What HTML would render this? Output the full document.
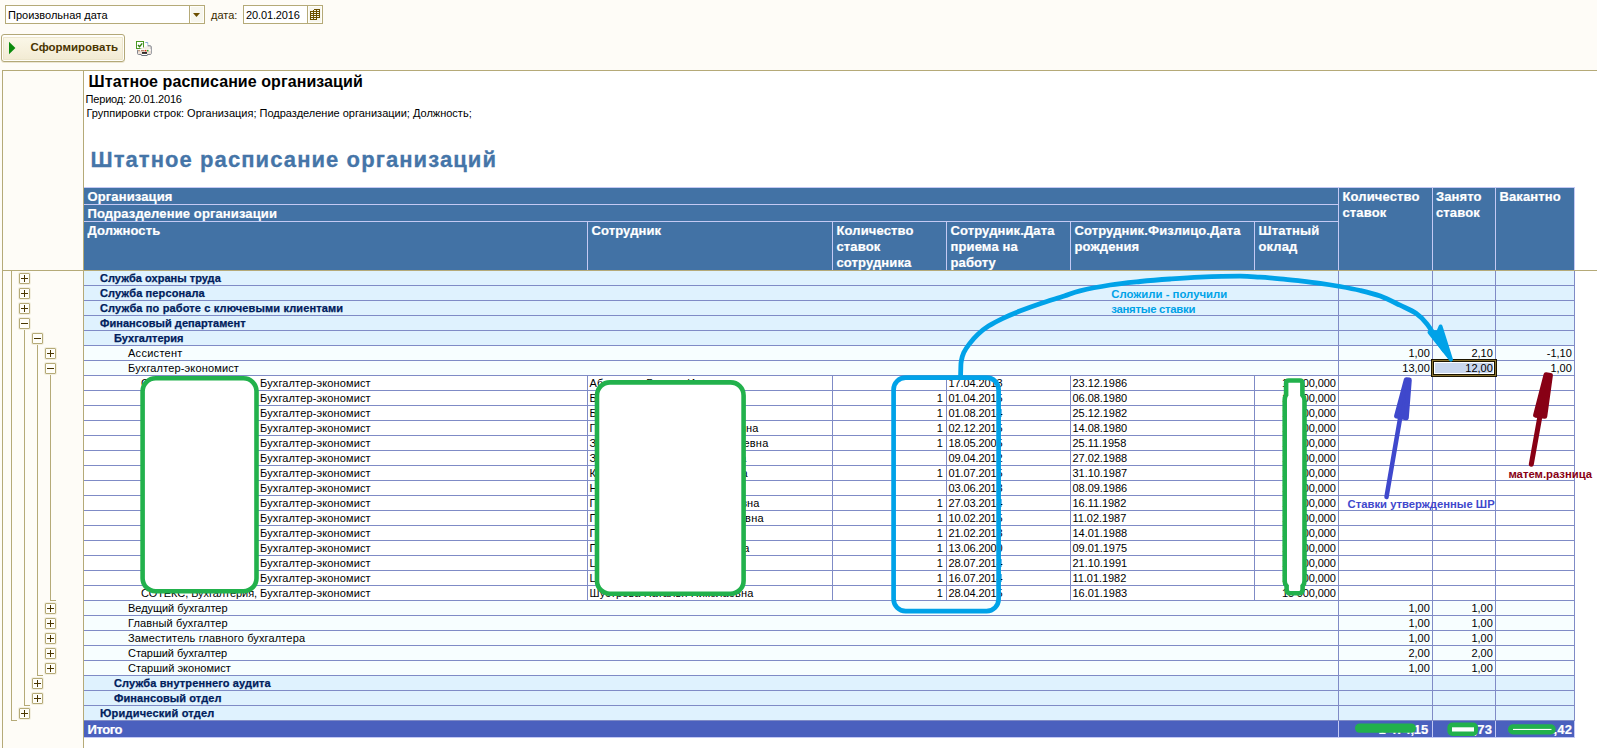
<!DOCTYPE html>
<html lang="ru"><head><meta charset="utf-8"><title>Штатное расписание организаций</title>
<style>
html,body{margin:0;padding:0}
body{width:1597px;height:748px;overflow:hidden;position:relative;background:#fefcf7;font-family:"Liberation Sans",sans-serif;font-size:11px;color:#000}
div,svg{position:absolute;box-sizing:border-box}
.t{white-space:pre;line-height:14px;font-size:11px}
.ls{letter-spacing:0.13px}
.b{white-space:pre;line-height:14px;font-size:11px;font-weight:bold;color:#00205c;-webkit-text-stroke:0.25px #00205c}
.h{white-space:pre;line-height:16px;font-size:13px;font-weight:bold;color:#fff;letter-spacing:0.12px;-webkit-text-stroke:0.2px #fff}
.ui{white-space:pre;line-height:14px;font-size:11px}
.pm{width:11px;height:11px;border:1px solid #b5aa78;background:#fffef9;border-radius:1px;box-shadow:0 0 0 1px #f3efe0}
.pm i{position:absolute;left:1px;top:4px;width:7px;height:1px;background:#4a3600}
.pm b{position:absolute;left:4px;top:1px;width:1px;height:7px;background:#4a3600}
</style></head><body>

<div class="" style="left:5px;top:5px;width:200px;height:19px;background:#fff;border:1px solid #b5aa78;"></div>
<div class="" style="left:189px;top:5px;width:16px;height:19px;background:#f7f6ee;border:1px solid #b5aa78;box-shadow:inset 0 0 0 1px #fffef9;"></div>
<svg style="left:192px;top:12px" width="10" height="6" viewBox="0 0 10 6"><path d="M1 1h7l-3.5 4z" fill="#6b4e00"/></svg>
<div class="ui" style="left:8px;top:8px;">Произвольная дата</div>
<div class="ui" style="left:211px;top:8px;color:#3a2c00;">дата:</div>
<div class="" style="left:243px;top:5px;width:80px;height:19px;background:#fff;border:1px solid #b5aa78;"></div>
<div class="" style="left:307px;top:5px;width:16px;height:19px;background:#f7f6ee;border:1px solid #b5aa78;box-shadow:inset 0 0 0 1px #fffef9;"></div>
<div class="ui" style="left:246px;top:8px;letter-spacing:-0.12px;">20.01.2016</div>
<svg style="left:309px;top:8px" width="12" height="13" viewBox="0 0 12 13" shape-rendering="crispEdges"><g fill="none" stroke="#6b4e00" stroke-width="1"><path d="M4.5 1.5h6v8h-3M1.5 3.5h6v8h-6zM4.5 1.5v2M7.5 1.5v2M7.5 3.5h3M1.5 5.5h9M1.5 7.5h9M1.5 9.5h6M4.5 3.5v8M7.5 3.5v6"/></g></svg>
<div style="left:1px;top:34px;width:124px;height:28px;border:1px solid #b3a878;border-radius:3px;background:linear-gradient(#fbf8ea,#f6f0dc 60%,#f1ead2);box-shadow:inset 0 2px 0 0 #fffefa,inset 0 0 0 1px #fffefa,inset 0 3px 0 0 #eee7cf,inset 0 0 0 2px #ece5cb,0 1px 0 #ece6d2"></div>
<svg style="left:8px;top:41px" width="9" height="14" viewBox="0 0 9 14"><path d="M1 0.8L7.4 7L1 13.2z" fill="#0a8a0c"/></svg>
<div class="ui" style="left:30.5px;top:40px;font-weight:bold;font-size:11.5px;color:#4a3500;">Сформировать</div>
<svg style="left:134px;top:39px" width="20" height="19" viewBox="0 0 20 19">
<rect x="2.5" y="2.5" width="7" height="7" fill="#fff" stroke="#4a9a22" stroke-width="1"/>
<path d="M4 6l1.6 1.7L8.2 4.4" fill="none" stroke="#2e7d0e" stroke-width="1.4"/>
<path d="M11.3 3.5h2.4v5" fill="none" stroke="#7fa8d0" stroke-width="1"/>
<rect x="11" y="4.5" width="2.5" height="5" fill="#fff"/>
<path d="M13.8 6.8h2.4a1 1 0 0 1 1 1v6.6a1 1 0 0 1-1 1h-11.7a1 1 0 0 1-1-1v-3.6" fill="#f3ece6" stroke="#777c86" stroke-width="1"/>
<rect x="3.9" y="10.2" width="12.8" height="4.8" fill="#efe3da"/>
<rect x="3.9" y="10.2" width="12.8" height="1.6" fill="#fff"/>
<rect x="4.2" y="11.2" width="1.6" height="1" fill="#a06a48"/><rect x="7" y="11.2" width="3.6" height="1" fill="#a06a48"/>
<rect x="11" y="10.9" width="1.5" height="1.5" fill="#f02a1a"/><rect x="13" y="10.9" width="1.5" height="1.5" fill="#22b020"/>
<rect x="8" y="13.2" width="5" height="1.5" fill="#000"/>
<path d="M6.8 15l.8 1.5h5.6l.8-1.5" fill="#fff" stroke="#70757f" stroke-width="1"/>
</svg>
<div class="" style="left:2px;top:70px;width:1595px;height:1px;background:#b5aa78;"></div>
<div class="" style="left:2px;top:70px;width:1px;height:678px;background:#b5aa78;"></div>
<div class="" style="left:83px;top:71px;width:1px;height:677px;background:#b5aa78;"></div>
<div class="" style="left:84px;top:71px;width:1513px;height:677px;background:#fff;"></div>
<div class="t" style="left:88.6px;top:73px;font-size:16px;font-weight:bold;line-height:18px;letter-spacing:0.07px;">Штатное расписание организаций</div>
<div class="t" style="left:85.6px;top:92px;letter-spacing:-0.2px;">Период: 20.01.2016</div>
<div class="t" style="left:86.4px;top:106px;">Группировки строк: Организация; Подразделение организации; Должность;</div>
<div class="t" style="left:90.5px;top:146px;font-size:22px;font-weight:bold;line-height:28px;color:#4575a8;letter-spacing:1.08px;-webkit-text-stroke:0.3px #4575a8;">Штатное расписание организаций</div>
<div class="" style="left:84px;top:187px;width:1491px;height:84px;background:#4272a5;"></div>
<div class="" style="left:84px;top:187px;width:1491px;height:1px;background:#c4c9f4;"></div>
<div class="" style="left:84px;top:204px;width:1254px;height:1px;background:#c4c9f4;"></div>
<div class="" style="left:84px;top:221px;width:1254px;height:1px;background:#c4c9f4;"></div>
<div class="" style="left:587px;top:222px;width:1px;height:48px;background:#c4c9f4;"></div>
<div class="" style="left:832px;top:222px;width:1px;height:48px;background:#c4c9f4;"></div>
<div class="" style="left:946px;top:222px;width:1px;height:48px;background:#c4c9f4;"></div>
<div class="" style="left:1070px;top:222px;width:1px;height:48px;background:#c4c9f4;"></div>
<div class="" style="left:1254px;top:222px;width:1px;height:48px;background:#c4c9f4;"></div>
<div class="" style="left:1338px;top:187px;width:1px;height:83px;background:#c4c9f4;"></div>
<div class="" style="left:1432px;top:187px;width:1px;height:83px;background:#c4c9f4;"></div>
<div class="" style="left:1495px;top:187px;width:1px;height:83px;background:#c4c9f4;"></div>
<div class="" style="left:1574px;top:187px;width:1px;height:83px;background:#c4c9f4;"></div>
<div class="h" style="left:87.5px;top:189px;">Организация</div>
<div class="h" style="left:87.5px;top:206px;">Подразделение организации</div>
<div class="h" style="left:87.5px;top:223px;">Должность</div>
<div class="h" style="left:591.5px;top:223px;">Сотрудник</div>
<div class="h" style="left:836.5px;top:223px;">Количество
ставок
сотрудника</div>
<div class="h" style="left:950.5px;top:223px;">Сотрудник.Дата
приема на
работу</div>
<div class="h" style="left:1074.5px;top:223px;">Сотрудник.Физлицо.Дата
рождения</div>
<div class="h" style="left:1258.5px;top:223px;">Штатный
оклад</div>
<div class="h" style="left:1342.5px;top:189px;">Количество
ставок</div>
<div class="h" style="left:1436px;top:189px;">Занято
ставок</div>
<div class="h" style="left:1499.5px;top:189px;">Вакантно</div>
<div class="" style="left:84px;top:271px;width:1490px;height:14px;background:#dff2fe;"></div>
<div class="" style="left:84px;top:285px;width:1491px;height:1px;background:#7f8bc6;"></div>
<div class="" style="left:84px;top:286px;width:1490px;height:14px;background:#dff2fe;"></div>
<div class="" style="left:84px;top:300px;width:1491px;height:1px;background:#7f8bc6;"></div>
<div class="" style="left:84px;top:301px;width:1490px;height:14px;background:#dff2fe;"></div>
<div class="" style="left:84px;top:315px;width:1491px;height:1px;background:#7f8bc6;"></div>
<div class="" style="left:84px;top:316px;width:1490px;height:14px;background:#dff2fe;"></div>
<div class="" style="left:84px;top:330px;width:1491px;height:1px;background:#7f8bc6;"></div>
<div class="" style="left:84px;top:331px;width:1490px;height:14px;background:#dff2fe;"></div>
<div class="" style="left:84px;top:345px;width:1491px;height:1px;background:#7f8bc6;"></div>
<div class="" style="left:84px;top:346px;width:1490px;height:14px;background:#f7feff;"></div>
<div class="" style="left:84px;top:360px;width:1491px;height:1px;background:#7f8bc6;"></div>
<div class="" style="left:84px;top:361px;width:1490px;height:14px;background:#f7feff;"></div>
<div class="" style="left:84px;top:375px;width:1491px;height:1px;background:#7f8bc6;"></div>
<div class="" style="left:84px;top:376px;width:1490px;height:14px;background:#fff;"></div>
<div class="" style="left:84px;top:390px;width:1491px;height:1px;background:#7f8bc6;"></div>
<div class="" style="left:84px;top:391px;width:1490px;height:14px;background:#fff;"></div>
<div class="" style="left:84px;top:405px;width:1491px;height:1px;background:#7f8bc6;"></div>
<div class="" style="left:84px;top:406px;width:1490px;height:14px;background:#fff;"></div>
<div class="" style="left:84px;top:420px;width:1491px;height:1px;background:#7f8bc6;"></div>
<div class="" style="left:84px;top:421px;width:1490px;height:14px;background:#fff;"></div>
<div class="" style="left:84px;top:435px;width:1491px;height:1px;background:#7f8bc6;"></div>
<div class="" style="left:84px;top:436px;width:1490px;height:14px;background:#fff;"></div>
<div class="" style="left:84px;top:450px;width:1491px;height:1px;background:#7f8bc6;"></div>
<div class="" style="left:84px;top:451px;width:1490px;height:14px;background:#fff;"></div>
<div class="" style="left:84px;top:465px;width:1491px;height:1px;background:#7f8bc6;"></div>
<div class="" style="left:84px;top:466px;width:1490px;height:14px;background:#fff;"></div>
<div class="" style="left:84px;top:480px;width:1491px;height:1px;background:#7f8bc6;"></div>
<div class="" style="left:84px;top:481px;width:1490px;height:14px;background:#fff;"></div>
<div class="" style="left:84px;top:495px;width:1491px;height:1px;background:#7f8bc6;"></div>
<div class="" style="left:84px;top:496px;width:1490px;height:14px;background:#fff;"></div>
<div class="" style="left:84px;top:510px;width:1491px;height:1px;background:#7f8bc6;"></div>
<div class="" style="left:84px;top:511px;width:1490px;height:14px;background:#fff;"></div>
<div class="" style="left:84px;top:525px;width:1491px;height:1px;background:#7f8bc6;"></div>
<div class="" style="left:84px;top:526px;width:1490px;height:14px;background:#fff;"></div>
<div class="" style="left:84px;top:540px;width:1491px;height:1px;background:#7f8bc6;"></div>
<div class="" style="left:84px;top:541px;width:1490px;height:14px;background:#fff;"></div>
<div class="" style="left:84px;top:555px;width:1491px;height:1px;background:#7f8bc6;"></div>
<div class="" style="left:84px;top:556px;width:1490px;height:14px;background:#fff;"></div>
<div class="" style="left:84px;top:570px;width:1491px;height:1px;background:#7f8bc6;"></div>
<div class="" style="left:84px;top:571px;width:1490px;height:14px;background:#fff;"></div>
<div class="" style="left:84px;top:585px;width:1491px;height:1px;background:#7f8bc6;"></div>
<div class="" style="left:84px;top:586px;width:1490px;height:14px;background:#fff;"></div>
<div class="" style="left:84px;top:600px;width:1491px;height:1px;background:#7f8bc6;"></div>
<div class="" style="left:84px;top:601px;width:1490px;height:14px;background:#f7feff;"></div>
<div class="" style="left:84px;top:615px;width:1491px;height:1px;background:#7f8bc6;"></div>
<div class="" style="left:84px;top:616px;width:1490px;height:14px;background:#f7feff;"></div>
<div class="" style="left:84px;top:630px;width:1491px;height:1px;background:#7f8bc6;"></div>
<div class="" style="left:84px;top:631px;width:1490px;height:14px;background:#f7feff;"></div>
<div class="" style="left:84px;top:645px;width:1491px;height:1px;background:#7f8bc6;"></div>
<div class="" style="left:84px;top:646px;width:1490px;height:14px;background:#f7feff;"></div>
<div class="" style="left:84px;top:660px;width:1491px;height:1px;background:#7f8bc6;"></div>
<div class="" style="left:84px;top:661px;width:1490px;height:14px;background:#f7feff;"></div>
<div class="" style="left:84px;top:675px;width:1491px;height:1px;background:#7f8bc6;"></div>
<div class="" style="left:84px;top:676px;width:1490px;height:14px;background:#dff2fe;"></div>
<div class="" style="left:84px;top:690px;width:1491px;height:1px;background:#7f8bc6;"></div>
<div class="" style="left:84px;top:691px;width:1490px;height:14px;background:#dff2fe;"></div>
<div class="" style="left:84px;top:705px;width:1491px;height:1px;background:#7f8bc6;"></div>
<div class="" style="left:84px;top:706px;width:1490px;height:14px;background:#dff2fe;"></div>
<div class="" style="left:84px;top:720px;width:1491px;height:1px;background:#7f8bc6;"></div>
<div class="" style="left:1338px;top:271px;width:1px;height:450px;background:#7f8bc6;"></div>
<div class="" style="left:1432px;top:271px;width:1px;height:450px;background:#7f8bc6;"></div>
<div class="" style="left:1495px;top:271px;width:1px;height:450px;background:#7f8bc6;"></div>
<div class="" style="left:1574px;top:271px;width:1px;height:450px;background:#7f8bc6;"></div>
<div class="" style="left:587px;top:376px;width:1px;height:225px;background:#7f8bc6;"></div>
<div class="" style="left:832px;top:376px;width:1px;height:225px;background:#7f8bc6;"></div>
<div class="" style="left:946px;top:376px;width:1px;height:225px;background:#7f8bc6;"></div>
<div class="" style="left:1070px;top:376px;width:1px;height:225px;background:#7f8bc6;"></div>
<div class="" style="left:1254px;top:376px;width:1px;height:225px;background:#7f8bc6;"></div>
<div class="b" style="left:100px;top:271px;letter-spacing:0.030px;">Служба охраны труда</div>
<div class="b" style="left:100px;top:286px;letter-spacing:0.112px;">Служба персонала</div>
<div class="b" style="left:100px;top:301px;letter-spacing:0.143px;">Служба по работе с ключевыми клиентами</div>
<div class="b" style="left:100px;top:316px;letter-spacing:0.046px;">Финансовый департамент</div>
<div class="b" style="left:114px;top:331px;letter-spacing:0.028px;">Бухгалтерия</div>
<div class="t" style="left:128px;top:346px;letter-spacing:0.279px;">Ассистент</div>
<div class="t" style="left:1338px;top:346px;width:91.8px;text-align:right;">1,00</div>
<div class="t" style="left:1432px;top:346px;width:60.8px;text-align:right;">2,10</div>
<div class="t" style="left:1495px;top:346px;width:76.8px;text-align:right;">-1,10</div>
<div class="t" style="left:128px;top:361px;letter-spacing:0.150px;">Бухгалтер-экономист</div>
<div class="t" style="left:1338px;top:361px;width:91.8px;text-align:right;">13,00</div>
<div class="t" style="left:1432px;top:361px;width:60.8px;text-align:right;">12,00</div>
<div class="t" style="left:1495px;top:361px;width:76.8px;text-align:right;">1,00</div>
<div class="t" style="left:141px;top:376px;"><span style="letter-spacing:-0.06px">СОТЕКС, Бухгалтерия, </span><span class="ls">Бухгалтер-экономист</span></div>
<div class="t emp" style="left:589.5px;top:376px;letter-spacing:0.259px;">Абрамова Галина Игоревна</div>
<div class="t" style="left:948.5px;top:376px;letter-spacing:-0.1px;">17.04.2013</div>
<div class="t" style="left:1072.5px;top:376px;letter-spacing:-0.05px;">23.12.1986</div>
<div class="t" style="left:1254px;top:376px;width:81.8px;text-align:right;letter-spacing:-0.12px;">15 000,000</div>
<div class="t" style="left:141px;top:391px;"><span style="letter-spacing:-0.06px">СОТЕКС, Бухгалтерия, </span><span class="ls">Бухгалтер-экономист</span></div>
<div class="t emp" style="left:589.5px;top:391px;letter-spacing:0.200px;">Белова Ирина Олеговна</div>
<div class="t" style="left:832px;top:391px;width:110.8px;text-align:right;">1</div>
<div class="t" style="left:948.5px;top:391px;letter-spacing:-0.1px;">01.04.2015</div>
<div class="t" style="left:1072.5px;top:391px;letter-spacing:-0.05px;">06.08.1980</div>
<div class="t" style="left:1254px;top:391px;width:81.8px;text-align:right;letter-spacing:-0.12px;">15 000,000</div>
<div class="t" style="left:141px;top:406px;"><span style="letter-spacing:-0.06px">СОТЕКС, Бухгалтерия, </span><span class="ls">Бухгалтер-экономист</span></div>
<div class="t emp" style="left:589.5px;top:406px;letter-spacing:0.200px;">Быкова Ольга Ильинична</div>
<div class="t" style="left:832px;top:406px;width:110.8px;text-align:right;">1</div>
<div class="t" style="left:948.5px;top:406px;letter-spacing:-0.1px;">01.08.2014</div>
<div class="t" style="left:1072.5px;top:406px;letter-spacing:-0.05px;">25.12.1982</div>
<div class="t" style="left:1254px;top:406px;width:81.8px;text-align:right;letter-spacing:-0.12px;">15 000,000</div>
<div class="t" style="left:141px;top:421px;"><span style="letter-spacing:-0.06px">СОТЕКС, Бухгалтерия, </span><span class="ls">Бухгалтер-экономист</span></div>
<div class="t emp" style="left:589.5px;top:421px;letter-spacing:0.170px;">Гаврилова Екатерина Павловна</div>
<div class="t" style="left:832px;top:421px;width:110.8px;text-align:right;">1</div>
<div class="t" style="left:948.5px;top:421px;letter-spacing:-0.1px;">02.12.2015</div>
<div class="t" style="left:1072.5px;top:421px;letter-spacing:-0.05px;">14.08.1980</div>
<div class="t" style="left:1254px;top:421px;width:81.8px;text-align:right;letter-spacing:-0.12px;">15 000,000</div>
<div class="t" style="left:141px;top:436px;"><span style="letter-spacing:-0.06px">СОТЕКС, Бухгалтерия, </span><span class="ls">Бухгалтер-экономист</span></div>
<div class="t emp" style="left:589.5px;top:436px;letter-spacing:0.231px;">Зайцева Александра Валерьевна</div>
<div class="t" style="left:832px;top:436px;width:110.8px;text-align:right;">1</div>
<div class="t" style="left:948.5px;top:436px;letter-spacing:-0.1px;">18.05.2005</div>
<div class="t" style="left:1072.5px;top:436px;letter-spacing:-0.05px;">25.11.1958</div>
<div class="t" style="left:1254px;top:436px;width:81.8px;text-align:right;letter-spacing:-0.12px;">15 000,000</div>
<div class="t" style="left:141px;top:451px;"><span style="letter-spacing:-0.06px">СОТЕКС, Бухгалтерия, </span><span class="ls">Бухгалтер-экономист</span></div>
<div class="t emp" style="left:589.5px;top:451px;letter-spacing:0.156px;">Зуева Валентина Васильевна</div>
<div class="t" style="left:948.5px;top:451px;letter-spacing:-0.1px;">09.04.2012</div>
<div class="t" style="left:1072.5px;top:451px;letter-spacing:-0.05px;">27.02.1988</div>
<div class="t" style="left:1254px;top:451px;width:81.8px;text-align:right;letter-spacing:-0.12px;">15 000,000</div>
<div class="t" style="left:141px;top:466px;"><span style="letter-spacing:-0.06px">СОТЕКС, Бухгалтерия, </span><span class="ls">Бухгалтер-экономист</span></div>
<div class="t emp" style="left:589.5px;top:466px;letter-spacing:0.357px;">Кузнецова Марина Павловна</div>
<div class="t" style="left:832px;top:466px;width:110.8px;text-align:right;">1</div>
<div class="t" style="left:948.5px;top:466px;letter-spacing:-0.1px;">01.07.2015</div>
<div class="t" style="left:1072.5px;top:466px;letter-spacing:-0.05px;">31.10.1987</div>
<div class="t" style="left:1254px;top:466px;width:81.8px;text-align:right;letter-spacing:-0.12px;">15 000,000</div>
<div class="t" style="left:141px;top:481px;"><span style="letter-spacing:-0.06px">СОТЕКС, Бухгалтерия, </span><span class="ls">Бухгалтер-экономист</span></div>
<div class="t emp" style="left:589.5px;top:481px;letter-spacing:0.200px;">Носова Ольга Ивановна</div>
<div class="t" style="left:948.5px;top:481px;letter-spacing:-0.1px;">03.06.2013</div>
<div class="t" style="left:1072.5px;top:481px;letter-spacing:-0.05px;">08.09.1986</div>
<div class="t" style="left:1254px;top:481px;width:81.8px;text-align:right;letter-spacing:-0.12px;">15 000,000</div>
<div class="t" style="left:141px;top:496px;"><span style="letter-spacing:-0.06px">СОТЕКС, Бухгалтерия, </span><span class="ls">Бухгалтер-экономист</span></div>
<div class="t emp" style="left:589.5px;top:496px;letter-spacing:0.109px;">Павленко Светлана Дмитриевна</div>
<div class="t" style="left:832px;top:496px;width:110.8px;text-align:right;">1</div>
<div class="t" style="left:948.5px;top:496px;letter-spacing:-0.1px;">27.03.2014</div>
<div class="t" style="left:1072.5px;top:496px;letter-spacing:-0.05px;">16.11.1982</div>
<div class="t" style="left:1254px;top:496px;width:81.8px;text-align:right;letter-spacing:-0.12px;">15 000,000</div>
<div class="t" style="left:141px;top:511px;"><span style="letter-spacing:-0.06px">СОТЕКС, Бухгалтерия, </span><span class="ls">Бухгалтер-экономист</span></div>
<div class="t emp" style="left:589.5px;top:511px;letter-spacing:0.280px;">Пономарева Виктория Олеговна</div>
<div class="t" style="left:832px;top:511px;width:110.8px;text-align:right;">1</div>
<div class="t" style="left:948.5px;top:511px;letter-spacing:-0.1px;">10.02.2015</div>
<div class="t" style="left:1072.5px;top:511px;letter-spacing:-0.05px;">11.02.1987</div>
<div class="t" style="left:1254px;top:511px;width:81.8px;text-align:right;letter-spacing:-0.12px;">15 000,000</div>
<div class="t" style="left:141px;top:526px;"><span style="letter-spacing:-0.06px">СОТЕКС, Бухгалтерия, </span><span class="ls">Бухгалтер-экономист</span></div>
<div class="t emp" style="left:589.5px;top:526px;letter-spacing:0.200px;">Попова Анна Юрьевна</div>
<div class="t" style="left:832px;top:526px;width:110.8px;text-align:right;">1</div>
<div class="t" style="left:948.5px;top:526px;letter-spacing:-0.1px;">21.02.2013</div>
<div class="t" style="left:1072.5px;top:526px;letter-spacing:-0.05px;">14.01.1988</div>
<div class="t" style="left:1254px;top:526px;width:81.8px;text-align:right;letter-spacing:-0.12px;">15 000,000</div>
<div class="t" style="left:141px;top:541px;"><span style="letter-spacing:-0.06px">СОТЕКС, Бухгалтерия, </span><span class="ls">Бухгалтер-экономист</span></div>
<div class="t emp" style="left:589.5px;top:541px;letter-spacing:0.177px;">Прохорова Наталия Павловна</div>
<div class="t" style="left:832px;top:541px;width:110.8px;text-align:right;">1</div>
<div class="t" style="left:948.5px;top:541px;letter-spacing:-0.1px;">13.06.2000</div>
<div class="t" style="left:1072.5px;top:541px;letter-spacing:-0.05px;">09.01.1975</div>
<div class="t" style="left:1254px;top:541px;width:81.8px;text-align:right;letter-spacing:-0.12px;">15 000,000</div>
<div class="t" style="left:141px;top:556px;"><span style="letter-spacing:-0.06px">СОТЕКС, Бухгалтерия, </span><span class="ls">Бухгалтер-экономист</span></div>
<div class="t emp" style="left:589.5px;top:556px;letter-spacing:0.200px;">Царева Юлия Олеговна</div>
<div class="t" style="left:832px;top:556px;width:110.8px;text-align:right;">1</div>
<div class="t" style="left:948.5px;top:556px;letter-spacing:-0.1px;">28.07.2014</div>
<div class="t" style="left:1072.5px;top:556px;letter-spacing:-0.05px;">21.10.1991</div>
<div class="t" style="left:1254px;top:556px;width:81.8px;text-align:right;letter-spacing:-0.12px;">15 000,000</div>
<div class="t" style="left:141px;top:571px;"><span style="letter-spacing:-0.06px">СОТЕКС, Бухгалтерия, </span><span class="ls">Бухгалтер-экономист</span></div>
<div class="t emp" style="left:589.5px;top:571px;letter-spacing:0.200px;">Цветкова Инна Ильинична</div>
<div class="t" style="left:832px;top:571px;width:110.8px;text-align:right;">1</div>
<div class="t" style="left:948.5px;top:571px;letter-spacing:-0.1px;">16.07.2014</div>
<div class="t" style="left:1072.5px;top:571px;letter-spacing:-0.05px;">11.01.1982</div>
<div class="t" style="left:1254px;top:571px;width:81.8px;text-align:right;letter-spacing:-0.12px;">15 000,000</div>
<div class="t" style="left:141px;top:586px;"><span style="letter-spacing:-0.06px">СОТЕКС, Бухгалтерия, </span><span class="ls">Бухгалтер-экономист</span></div>
<div class="t emp" style="left:589.5px;top:586px;letter-spacing:0.121px;">Шустрова Наталья Николаевна</div>
<div class="t" style="left:832px;top:586px;width:110.8px;text-align:right;">1</div>
<div class="t" style="left:948.5px;top:586px;letter-spacing:-0.1px;">28.04.2015</div>
<div class="t" style="left:1072.5px;top:586px;letter-spacing:-0.05px;">16.01.1983</div>
<div class="t" style="left:1254px;top:586px;width:81.8px;text-align:right;letter-spacing:-0.12px;">15 000,000</div>
<div class="t" style="left:128px;top:601px;letter-spacing:-0.034px;">Ведущий бухгалтер</div>
<div class="t" style="left:1338px;top:601px;width:91.8px;text-align:right;">1,00</div>
<div class="t" style="left:1432px;top:601px;width:60.8px;text-align:right;">1,00</div>
<div class="t" style="left:128px;top:616px;letter-spacing:0.136px;">Главный бухгалтер</div>
<div class="t" style="left:1338px;top:616px;width:91.8px;text-align:right;">1,00</div>
<div class="t" style="left:1432px;top:616px;width:60.8px;text-align:right;">1,00</div>
<div class="t" style="left:128px;top:631px;letter-spacing:0.136px;">Заместитель главного бухгалтера</div>
<div class="t" style="left:1338px;top:631px;width:91.8px;text-align:right;">1,00</div>
<div class="t" style="left:1432px;top:631px;width:60.8px;text-align:right;">1,00</div>
<div class="t" style="left:128px;top:646px;letter-spacing:-0.034px;">Старший бухгалтер</div>
<div class="t" style="left:1338px;top:646px;width:91.8px;text-align:right;">2,00</div>
<div class="t" style="left:1432px;top:646px;width:60.8px;text-align:right;">2,00</div>
<div class="t" style="left:128px;top:661px;letter-spacing:0.023px;">Старший экономист</div>
<div class="t" style="left:1338px;top:661px;width:91.8px;text-align:right;">1,00</div>
<div class="t" style="left:1432px;top:661px;width:60.8px;text-align:right;">1,00</div>
<div class="b" style="left:114px;top:676px;letter-spacing:0.132px;">Служба внутреннего аудита</div>
<div class="b" style="left:114px;top:691px;letter-spacing:0.088px;">Финансовый отдел</div>
<div class="b" style="left:100px;top:706px;letter-spacing:0.212px;">Юридический отдел</div>
<div class="" style="left:84px;top:721px;width:1491px;height:17px;background:#4a60be;"></div>
<div class="" style="left:84px;top:737px;width:1491px;height:1px;background:#c4c9f4;"></div>
<div class="" style="left:1338px;top:721px;width:1px;height:17px;background:#c4c9f4;"></div>
<div class="" style="left:1432px;top:721px;width:1px;height:17px;background:#c4c9f4;"></div>
<div class="" style="left:1495px;top:721px;width:1px;height:17px;background:#c4c9f4;"></div>
<div class="" style="left:1574px;top:721px;width:1px;height:17px;background:#c4c9f4;"></div>
<div class="h" style="left:87.5px;top:722px;letter-spacing:-0.4px;">Итого</div>
<div class="h" style="left:1338px;top:722px;width:90px;text-align:right;letter-spacing:-0.15px;">1 474,15</div>
<div class="h" style="left:1432px;top:722px;width:60px;text-align:right;">161,73</div>
<div class="h" style="left:1495px;top:722px;width:77px;text-align:right;">312,42</div>
<div class="" style="left:3px;top:270px;width:1594px;height:1px;background:#b5aa78;"></div>
<div class="" style="left:11px;top:271px;width:1px;height:450px;background:#b5aa78;"></div>
<div class="" style="left:11px;top:720px;width:6px;height:1px;background:#b5aa78;"></div>
<div class="" style="left:24px;top:329px;width:1px;height:377px;background:#b5aa78;"></div>
<div class="" style="left:24px;top:705px;width:6px;height:1px;background:#b5aa78;"></div>
<div class="" style="left:37px;top:344px;width:1px;height:332px;background:#b5aa78;"></div>
<div class="" style="left:37px;top:675px;width:6px;height:1px;background:#b5aa78;"></div>
<div class="" style="left:50px;top:374px;width:1px;height:227px;background:#b5aa78;"></div>
<div class="" style="left:50px;top:600px;width:6px;height:1px;background:#b5aa78;"></div>
<div class="pm" style="left:19px;top:273px"><i></i><b></b></div>
<div class="pm" style="left:19px;top:288px"><i></i><b></b></div>
<div class="pm" style="left:19px;top:303px"><i></i><b></b></div>
<div class="pm" style="left:19px;top:318px"><i></i></div>
<div class="pm" style="left:32px;top:333px"><i></i></div>
<div class="pm" style="left:45px;top:348px"><i></i><b></b></div>
<div class="pm" style="left:45px;top:363px"><i></i></div>
<div class="pm" style="left:45px;top:603px"><i></i><b></b></div>
<div class="pm" style="left:45px;top:618px"><i></i><b></b></div>
<div class="pm" style="left:45px;top:633px"><i></i><b></b></div>
<div class="pm" style="left:45px;top:648px"><i></i><b></b></div>
<div class="pm" style="left:45px;top:663px"><i></i><b></b></div>
<div class="pm" style="left:32px;top:678px"><i></i><b></b></div>
<div class="pm" style="left:32px;top:693px"><i></i><b></b></div>
<div class="pm" style="left:19px;top:708px"><i></i><b></b></div>
<div class="" style="left:1431px;top:359px;width:66px;height:18px;border:1px solid #1c1500;"></div>
<div class="" style="left:1432px;top:360px;width:64px;height:16px;border:1px solid #8a7432;"></div>
<div class="" style="left:1433px;top:361px;width:62px;height:14px;background:#fff;border:1px solid #1c1500;"></div>
<div class="" style="left:1435px;top:363px;width:58px;height:10px;background:#c9d7ee;"></div>
<div class="t" style="left:1432px;top:361px;width:60.8px;text-align:right;">12,00</div>
<svg style="left:0;top:0" width="1597" height="748" viewBox="0 0 1597 748">
<g fill="#fff" stroke="#22b14c" stroke-width="4.6">
<rect x="142.6" y="378.3" width="113.9" height="213" rx="13" ry="13"/>
<rect x="597" y="382.4" width="146.6" height="211.3" rx="13" ry="13"/>
<path d="M1288.8 380.5 H1299.8 Q1302.4 380.5 1302.4 383 V395 Q1304.5 397 1304.5 400 V581 Q1304.5 584 1302.6 586 V589.5 Q1302.6 593.3 1298.8 593.3 H1290.4 Q1286.6 593.3 1286.6 589.5 V586 Q1284.7 584 1284.7 581 V400 Q1284.7 397 1286.1 395 V383 Q1286.1 380.5 1288.8 380.5 Z"/>
</g>
<rect x="893.6" y="377.6" width="105" height="233.5" rx="12" ry="12" fill="none" stroke="#00a2e8" stroke-width="4.7"/>
<path d="M960.6 377.0 C960.6 375.5 960.7 370.7 960.8 368.0 C960.9 365.3 960.8 363.6 961.3 361.0 C961.8 358.4 962.5 355.4 963.8 352.6 C965.1 349.8 966.9 347.1 969.2 344.1 C971.5 341.1 974.5 337.5 977.7 334.5 C980.9 331.5 984.3 328.8 988.5 326.1 C992.7 323.4 997.7 320.8 1002.9 318.3 C1008.1 315.8 1013.4 313.6 1019.8 311.1 C1026.2 308.6 1034.0 305.7 1041.4 303.2 C1048.8 300.7 1057.9 298.1 1064.3 296.0 C1070.7 293.9 1072.4 292.6 1080.0 290.8 C1087.6 289.0 1100.1 286.6 1110.1 285.0 C1120.1 283.4 1130.1 282.5 1140.1 281.5 C1150.1 280.5 1160.2 279.7 1170.2 279.0 C1180.2 278.3 1188.6 277.7 1200.2 277.2 C1211.8 276.7 1230.0 276.2 1240.0 276.2 C1250.0 276.2 1253.3 276.8 1260.0 277.2 C1266.7 277.6 1273.4 278.2 1280.1 278.8 C1286.8 279.4 1293.4 280.1 1300.1 280.8 C1306.8 281.6 1313.5 282.4 1320.2 283.3 C1326.9 284.2 1333.5 285.3 1340.2 286.5 C1346.9 287.7 1353.5 288.9 1360.2 290.5 C1366.9 292.1 1373.7 293.7 1380.3 296.1 C1386.9 298.6 1394.0 302.3 1400.0 305.2 C1406.0 308.1 1411.5 310.2 1416.0 313.3 C1420.5 316.4 1423.7 319.9 1427.0 324.0 C1430.3 328.1 1433.2 333.7 1436.0 338.0 C1438.8 342.3 1442.7 348.0 1444.0 350.0" fill="none" stroke="#00a2e8" stroke-width="4.8" stroke-linecap="round"/>
<path d="M1440.6 326.5 L1438.3 332 L1429.5 332.3 L1451 359.5 Z" fill="#00a2e8" stroke="#00a2e8" stroke-width="4" stroke-linejoin="round"/>
<g font-family="Liberation Sans, sans-serif" font-weight="bold" font-size="11.35px">
<text x="1111.3" y="298" fill="#00a2e8">Сложили - получили</text>
<text x="1111.3" y="313" fill="#00a2e8" letter-spacing="-0.28">занятые ставки</text>
<text x="1347.6" y="508" fill="#3f48cc" font-size="11.27px">Ставки утвержденные ШР</text>
<text x="1508.4" y="477.7" fill="#880015" font-size="11.3px">матем.разница</text>
</g>
<path d="M1386.5 497 L1400.3 417" stroke="#3f48cc" stroke-width="4.5" stroke-linecap="round" fill="none"/>
<path d="M1396.6 416 L1406.3 417.8 L1409.3 380.1 L1406.3 379.7 Z" fill="#3f48cc" stroke="#3f48cc" stroke-width="5" stroke-linejoin="round"/>
<path d="M1531.3 464.3 L1539.8 417" stroke="#880015" stroke-width="5" stroke-linecap="round" fill="none"/>
<path d="M1535.6 415.2 L1544.8 416.2 L1550.4 375.4 L1546 374.8 Z" fill="#880015" stroke="#880015" stroke-width="5" stroke-linejoin="round"/>
<rect x="1355" y="723.4" width="61" height="9.4" rx="4.7" fill="#22b14c"/>
<rect x="1447.4" y="722.6" width="30.6" height="13.4" rx="5" fill="#22b14c"/>
<rect x="1452" y="727.3" width="22" height="4.2" fill="#fff"/>
<rect x="1508" y="724.2" width="47.7" height="10.2" rx="5" fill="#22b14c"/>
<rect x="1513" y="728.9" width="38.5" height="1.1" fill="#fff"/>
</svg>
</body></html>
